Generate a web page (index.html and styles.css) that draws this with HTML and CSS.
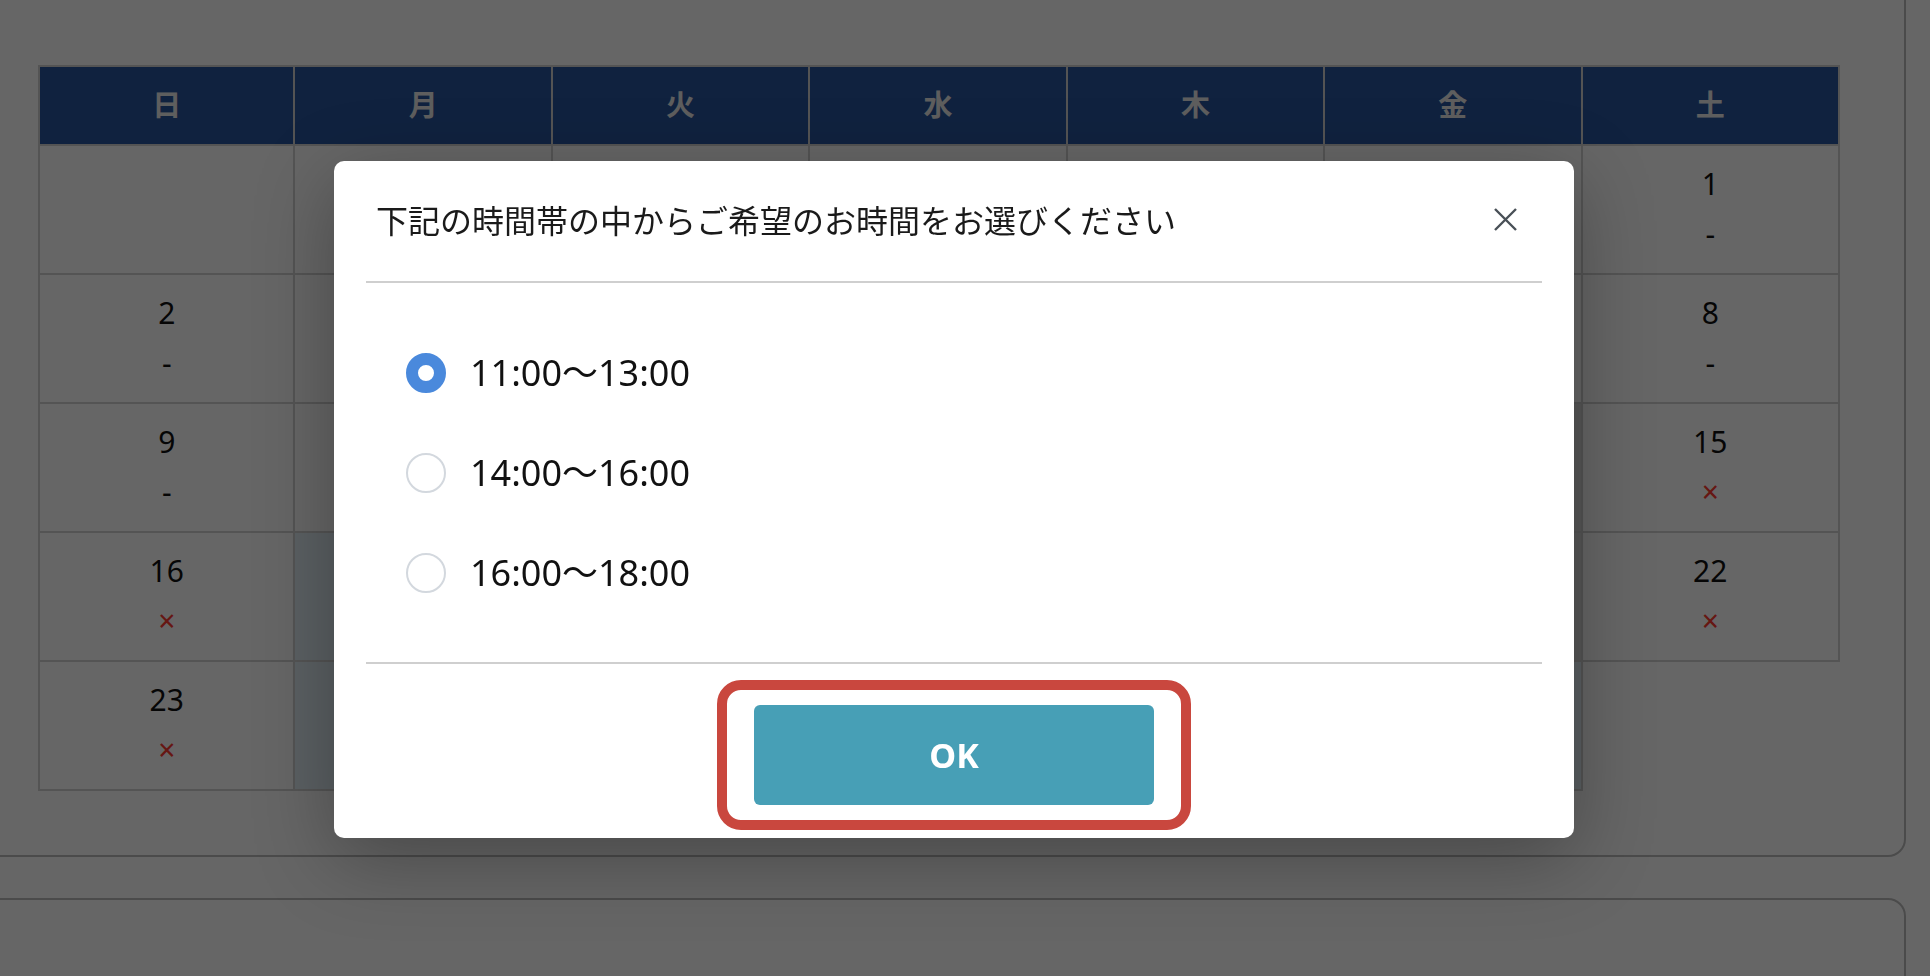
FILE: index.html
```html
<!DOCTYPE html>
<html lang="ja">
<head>
  <meta charset="UTF-8" />
  <meta name="viewport" content="width=device-width, initial-scale=1.0"/>
  <title>ご予約 - 日時選択</title>
  <link rel="stylesheet" href="styles.css">
</head>
<body class="modal-open">
  <main class="page">
    <section class="card">
      <table class="calendar">
        <thead>
          <tr>
            <th>日</th><th>月</th><th>火</th><th>水</th><th>木</th><th>金</th><th>土</th>
          </tr>
        </thead>
        <tbody>
          <tr>
            <td></td><td></td><td></td><td></td><td></td><td></td>
            <td><span class="num">1</span><span class="mark">-</span></td>
          </tr>
          <tr>
            <td><span class="num">2</span><span class="mark">-</span></td>
            <td></td><td></td><td></td><td></td><td></td>
            <td><span class="num">8</span><span class="mark">-</span></td>
          </tr>
          <tr>
            <td><span class="num">9</span><span class="mark">-</span></td>
            <td></td><td></td><td></td><td></td>
            <td class="closed"></td>
            <td><span class="num">15</span><span class="mark ng">×</span></td>
          </tr>
          <tr>
            <td><span class="num">16</span><span class="mark ng">×</span></td>
            <td class="open"></td>
            <td></td><td></td><td></td>
            <td class="closed"></td>
            <td><span class="num">22</span><span class="mark ng">×</span></td>
          </tr>
          <tr>
            <td><span class="num">23</span><span class="mark ng">×</span></td>
            <td class="open"></td>
            <td></td><td></td><td></td>
            <td class="open"></td>
          </tr>
        </tbody>
      </table>
    </section>
    <section class="card card-next"></section>
  </main>

  <div class="backdrop"></div>
  <div class="modal-wrap">
    <div class="modal">
      <div class="modal-header">
        <h2 class="modal-title">下記の時間帯の中からご希望のお時間をお選びください</h2>
        <button class="close" type="button" aria-label="閉じる">
          <svg width="23" height="23" viewBox="0 0 23 23">
            <path d="M1 1L22 22M22 1L1 22" stroke="#495057" stroke-width="2.4" fill="none"/>
          </svg>
        </button>
      </div>
      <div class="modal-body">
        <label class="option"><input type="radio" name="time" checked><span>11:00〜13:00</span></label>
        <label class="option"><input type="radio" name="time"><span>14:00〜16:00</span></label>
        <label class="option"><input type="radio" name="time"><span>16:00〜18:00</span></label>
      </div>
      <div class="modal-footer">
        <div class="highlight">
          <button class="ok" type="button">OK</button>
        </div>
      </div>
    </div>
  </div>
</body>
</html>
```

FILE: styles.css
```css
body {
  margin: 0;
  background: #fff;
  font-family: "Noto Sans", "Noto Sans CJK JP", sans-serif;
  color: #111;
}

body.modal-open {
  overflow: hidden;
}

.page {
  padding-right: 24px;
}

.card {
  margin: -40px 0 0 -28px;
  padding: 103px 64px 64px;
  border: 2px solid #bcbcbc;
  border-radius: 18px;
  background: #fff;
}

.card-next {
  margin-top: 41px;
  padding: 0;
  height: 200px;
}

/* calendar */
.calendar {
  width: 100%;
  table-layout: fixed;
  border-collapse: separate;
  border-spacing: 0;
}

.calendar th,
.calendar td {
  border-right: 2px solid #d2d2d2;
  border-bottom: 2px solid #d2d2d2;
  text-align: center;
}

.calendar tr > :first-child {
  border-left: 2px solid #d2d2d2;
}

.calendar th {
  height: 71px;
  padding: 0 0 6px;
  border-top: 2px solid #d2d2d2;
  background: #28559e;
  color: #ececec;
  font-family: "Noto Sans CJK JP", sans-serif;
  font-size: 29px;
  font-weight: 700;
}

.calendar td {
  padding: 13px 0 14px;
  font-size: 30px;
  line-height: 50px;
  vertical-align: top;
}

.calendar .num,
.calendar .mark {
  display: block;
}

.calendar .ng {
  color: #ff3b30;
}

.calendar .open {
  background: #e4f0f8;
}

.calendar .closed {
  background: #dcdcdc;
}

/* modal */
.backdrop {
  position: fixed;
  inset: 0;
  background: rgba(0, 0, 0, 0.6);
}

.modal-wrap {
  position: fixed;
  inset: 0;
  padding: 161px 22px 0 0;
  display: flex;
  justify-content: center;
  align-items: flex-start;
}

.modal {
  width: 1240px;
  background: #fff;
  border-radius: 10px;
  box-shadow: 0 20px 80px rgba(0, 0, 0, 0.3);
}

.modal-header {
  height: 116px;
  margin: 0 32px;
  padding: 0 25px 4px 10px;
  border-bottom: 2px solid #cfcfcf;
  display: flex;
  align-items: center;
  justify-content: space-between;
}

.modal-title {
  margin: 0;
  font-family: "Noto Sans CJK JP", sans-serif;
  font-size: 32px;
  font-weight: 400;
  color: #1a1a1a;
}

.close {
  width: 23px;
  height: 23px;
  padding: 0;
  border: none;
  background: none;
  display: flex;
}

.modal-body {
  padding: 40px 72px 39px;
}

.option {
  height: 100px;
  display: flex;
  align-items: center;
  gap: 24px;
  font-size: 36px;
  color: #111;
}

.option span {
  padding-bottom: 5px;
}

.option input {
  appearance: none;
  -webkit-appearance: none;
  box-sizing: border-box;
  width: 40px;
  height: 40px;
  margin: 0;
  border: 2px solid #d3d8de;
  border-radius: 50%;
  background: #fff;
}

.option input:checked {
  border: 12px solid #4a89dc;
}

.modal-footer {
  margin: 0 32px;
  padding: 16px 0 8px;
  border-top: 2px solid #cfcfcf;
  display: flex;
  justify-content: center;
}

.highlight {
  padding: 15px 27px;
  border: 10px solid #c9473e;
  border-radius: 24px;
}

.ok {
  width: 400px;
  height: 100px;
  border: none;
  border-radius: 6px;
  background: #479fb6;
  color: #fff;
  font-family: "Noto Sans", sans-serif;
  font-size: 34px;
  font-weight: 700;
}
```
